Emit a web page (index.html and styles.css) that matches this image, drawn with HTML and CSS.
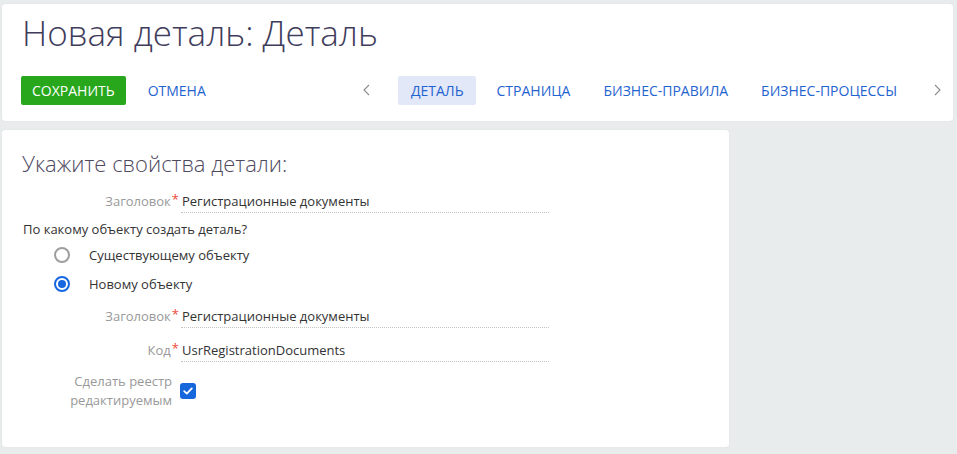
FILE: index.html
```html
<!DOCTYPE html>
<html lang="ru">
<head>
<meta charset="utf-8">
<title>Новая деталь</title>
<link rel="stylesheet" href="styles.css">
</head>
<body>
<div class="page">
  <header class="card head-card">
    <h1 class="page-title">Новая деталь: Деталь</h1>
    <div class="toolbar">
      <button class="btn-save">СОХРАНИТЬ</button>
      <button class="btn-link">ОТМЕНА</button>
      <nav class="tabs-nav">
        <span class="arrow"><svg width="7" height="12" viewBox="0 0 7 12"><polyline points="6,1 1,6 6,11" fill="none" stroke="#8a8a8a" stroke-width="1.1"/></svg></span>
        <div class="tabs">
          <span class="tab active">ДЕТАЛЬ</span>
          <span class="tab">СТРАНИЦА</span>
          <span class="tab">БИЗНЕС-ПРАВИЛА</span>
          <span class="tab">БИЗНЕС-ПРОЦЕССЫ</span>
        </div>
        <span class="arrow"><svg width="7" height="12" viewBox="0 0 7 12"><polyline points="1,1 6,6 1,11" fill="none" stroke="#8a8a8a" stroke-width="1.1"/></svg></span>
      </nav>
    </div>
  </header>

  <section class="card form-card">
    <h2 class="section-title">Укажите свойства детали:</h2>
    <div class="field-row">
      <label class="field-label">Заголовок<span class="req">*</span></label>
      <div class="field-value">Регистрационные документы</div>
    </div>
    <div class="question">По какому объекту создать деталь?</div>
    <div class="radio-row first">
      <span class="radio"></span>
      <span class="radio-label">Существующему объекту</span>
    </div>
    <div class="radio-row">
      <span class="radio checked"></span>
      <span class="radio-label">Новому объекту</span>
    </div>
    <div class="field-row gap-small">
      <label class="field-label">Заголовок<span class="req">*</span></label>
      <div class="field-value">Регистрационные документы</div>
    </div>
    <div class="field-row">
      <label class="field-label">Код<span class="req">*</span></label>
      <div class="field-value">UsrRegistrationDocuments</div>
    </div>
    <div class="check-row">
      <label class="check-label">Сделать реестр<br>редактируемым</label>
      <span class="checkbox"><svg width="10" height="8" viewBox="0 0 10 8"><polyline points="1.2,4.2 3.8,6.6 8.8,1.4" fill="none" stroke="#fff" stroke-width="1.8" stroke-linecap="round" stroke-linejoin="round"/></svg></span>
    </div>
  </section>
</div>
</body>
</html>
```

FILE: styles.css
```css
* { box-sizing: border-box; }
html, body { margin: 0; padding: 0; }
body {
  background: #e8ecec;
  font-family: "Open Sans", "Liberation Sans", sans-serif;
  font-size: 13px;
  color: #333;
  width: 957px;
  height: 454px;
  overflow: hidden;
}
.page {
  padding: 4px 0 0 2px;
  display: flex;
  flex-direction: column;
  align-items: flex-start;
  gap: 9px;
}
.card {
  background: #fff;
  border-radius: 3px;
  box-shadow: 0 0 1px rgba(0,0,0,0.12);
}
.head-card {
  width: 951px;
  height: 117px;
  padding: 7px 12px 0 20px;
}
.page-title {
  margin: 0 0 21px 0;
  font-weight: 300;
  font-size: 35px;
  line-height: 44px;
  color: #3f3d5c;
}
.toolbar {
  display: flex;
  align-items: center;
  height: 29px;
}
.btn-save {
  height: 29px;
  padding: 0 11px;
  margin-left: -1px;
  border: none;
  border-radius: 2px;
  background: #28a71d;
  color: #fff;
  font-family: "Open Sans", "Liberation Sans", sans-serif;
  font-size: 14px;
  line-height: 29px;
}
.btn-link {
  height: 29px;
  margin-left: 10px;
  padding: 0 12px;
  border: none;
  background: transparent;
  color: #1f63cf;
  font-family: "Open Sans", "Liberation Sans", sans-serif;
  font-size: 14px;
}
.tabs-nav {
  margin-left: auto;
  display: flex;
  align-items: center;
  height: 29px;
}
.arrow {
  display: flex;
  align-items: center;
  height: 29px;
  margin-top: -2px;
}
.tabs {
  display: flex;
  gap: 9px;
  margin: 0 25px 0 28px;
}
.tab {
  height: 29px;
  line-height: 29px;
  padding: 0 12px;
  border-radius: 2px;
  color: #1f63cf;
  font-size: 14px;
}
.tab.active {
  background: #e2e8f8;
  padding: 0 12px 0 13px;
}
.form-card {
  width: 727px;
  height: 317px;
  padding: 17px 0 0 0;
}
.section-title {
  margin: 0 0 10px 20px;
  font-weight: 300;
  font-size: 22px;
  line-height: 32px;
  color: #4e4a5e;
}
.field-row {
  display: flex;
  align-items: center;
  height: 24px;
  margin-bottom: 10px;
}
.field-row.gap-small { margin-top: 6px; }
.field-label {
  width: 177px;
  text-align: right;
  color: #999;
}
.req {
  color: #f04a3b;
  margin-left: 1px;
  position: relative;
  top: -2px;
}
.field-value {
  width: 368px;
  height: 24px;
  margin-left: 2px;
  padding-left: 1px;
  line-height: 24px;
  border-bottom: 1px dotted #c4c4c4;
  color: #333;
}
.question {
  margin: -3px 0 0 21px;
  line-height: 19px;
  color: #333;
}
.radio-row {
  display: flex;
  align-items: center;
  height: 29px;
  padding-left: 52px;
  gap: 19px;
}
.radio-row.first { margin-top: 1px; }
.radio {
  width: 16px;
  height: 16px;
  border-radius: 50%;
  border: 2px solid #9e9e9e;
  display: flex;
  align-items: center;
  justify-content: center;
}
.radio.checked {
  border-color: #1667e0;
}
.radio.checked::after {
  content: "";
  width: 8px;
  height: 8px;
  border-radius: 50%;
  background: #1667e0;
}
.radio-label { color: #333; }
.check-row {
  display: flex;
  align-items: center;
}
.check-label {
  width: 170px;
  text-align: right;
  color: #999;
  line-height: 19px;
}
.checkbox {
  width: 16px;
  height: 16px;
  margin-left: 8px;
  border-radius: 3px;
  background: #1767dc;
  display: flex;
  align-items: center;
  justify-content: center;
}
```
